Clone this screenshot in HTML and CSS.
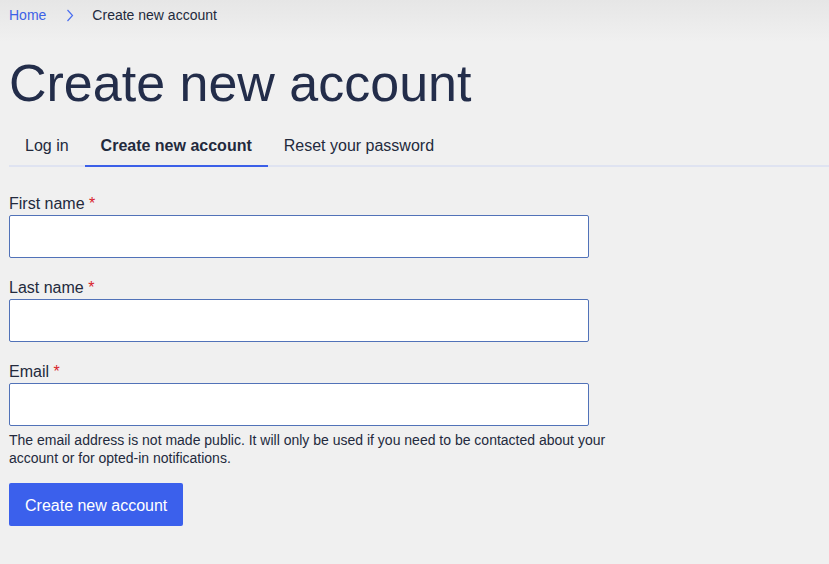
FILE: index.html
```html
<!DOCTYPE html>
<html lang="en">
<head>
<meta charset="utf-8">
<title>Create new account</title>
<link rel="stylesheet" href="styles.css">
</head>
<body>
<header class="top">
  <nav class="breadcrumb">
    <a class="crumb-link" href="#">Home</a>
    <svg class="crumb-sep" width="8" height="13" viewBox="0 0 8 13" aria-hidden="true"><path d="M1.5 1 L6.5 6.5 L1.5 12" fill="none" stroke="#4a6ef0" stroke-width="1.2"/></svg>
    <span class="crumb-current">Create new account</span>
  </nav>
</header>
<main class="page">
  <h1 class="title">Create new account</h1>
  <ul class="tabs">
    <li><a class="tab" href="#">Log in</a></li>
    <li><a class="tab active" href="#">Create new account</a></li>
    <li><a class="tab" href="#">Reset your password</a></li>
  </ul>
  <form class="form">
    <div class="field">
      <label class="label">First name <span class="req">*</span></label>
      <input class="input" type="text">
    </div>
    <div class="field">
      <label class="label">Last name <span class="req">*</span></label>
      <input class="input" type="text">
    </div>
    <div class="field field-last">
      <label class="label">Email <span class="req">*</span></label>
      <input class="input" type="email">
      <p class="desc">The email address is not made public. It will only be used if you need to be contacted about your account or for opted-in notifications.</p>
    </div>
    <button class="btn" type="button">Create new account</button>
  </form>
</main>
</body>
</html>
```

FILE: styles.css
```css
* { box-sizing: border-box; }
html { background: #f0f0f0; }
html, body { margin: 0; padding: 0; }
body {
  background: linear-gradient(#e6e6e6, #f0f0f0 42px) no-repeat;
  font-family: "Liberation Sans", Arial, sans-serif;
  color: #232a3d;
  width: 829px;
  min-height: 564px;
  overflow: hidden;
}
.top { height: 28px; }
.breadcrumb {
  display: flex;
  align-items: center;
  padding: 5px 0 0 9px;
  font-size: 14px;
  line-height: 20px;
  height: 25px;
}
.crumb-link { color: #3d62e6; text-decoration: none; }
.crumb-sep { margin: 0 18px 0 20px; }
.crumb-current { color: #232a3d; }
.page { padding: 0 0 0 9px; }
.title {
  margin: 25px 0 10px 0;
  font-size: 52px;
  line-height: 60px;
  font-weight: 400;
  color: #232d4a;
}
.tabs {
  list-style: none;
  margin: 0;
  padding: 0;
  display: flex;
  border-bottom: 2px solid #dfe3f1;
}
.tabs li { margin-bottom: -2px; }
.tab {
  display: block;
  padding: 13px 16px 9px;
  font-size: 16px;
  line-height: 20px;
  color: #232a3d;
  text-decoration: none;
  border-bottom: 2px solid transparent;
}
.tab.active { font-weight: 700; border-bottom-color: #3b5fe8; }
.form { padding-top: 27px; }
.field { margin-bottom: 20px; }
.field-last { margin-bottom: 16px; }
.label {
  display: block;
  font-size: 16px;
  line-height: 20px;
  margin-bottom: 1px;
}
.req { color: #d8232a; }
.input {
  display: block;
  width: 580px;
  height: 43px;
  border: 1px solid #5172b8;
  border-radius: 2px;
  background: #fff;
  margin: 0;
}
.desc {
  margin: 5px 0 0 0;
  width: 620px;
  font-size: 14px;
  line-height: 18px;
}
.btn {
  display: block;
  height: 43px;
  padding: 2px 16px 0;
  border: 0;
  border-radius: 2px;
  background: #3b60ec;
  color: #fff;
  font-family: "Liberation Sans", Arial, sans-serif;
  font-size: 16px;
  line-height: 20px;
}
```
